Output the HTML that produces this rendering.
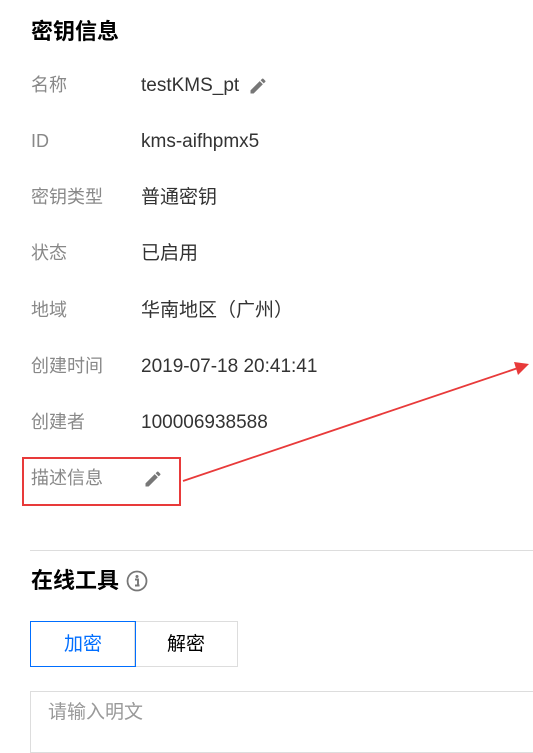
<!DOCTYPE html>
<html><head><meta charset="utf-8"><style>
body{margin:0;width:533px;height:740px;background:#fff;overflow:hidden;position:relative;font-family:"Liberation Sans","Noto Sans CJK SC",sans-serif;}
.a{position:absolute;white-space:nowrap;line-height:1;}
.t{font-size:22px;font-weight:bold;color:#000;}
.l{font-size:18px;color:#888;left:31px;}
.v{font-size:19px;color:#333;left:141px;}
</style></head><body>
<div class="a t" style="left:31px;top:21px">密钥信息</div>
<div class="a l" style="top:76px">名称</div><div class="a v" style="top:76px">testKMS_pt</div>
<svg class="a" style="left:248px;top:76px" width="20" height="20" viewBox="0 0 24 24"><path fill="#777" d="M3 17.25V21h3.75L17.81 9.94l-3.75-3.75L3 17.25zM20.71 7.04a1 1 0 000-1.41l-2.34-2.34a1 1 0 00-1.41 0l-1.83 1.83 3.75 3.75 1.83-1.83z"/></svg>
<div class="a l" style="top:132px">ID</div><div class="a v" style="top:132px">kms-aifhpmx5</div>
<div class="a l" style="top:188px">密钥类型</div><div class="a v" style="top:188px">普通密钥</div>
<div class="a l" style="top:244px">状态</div><div class="a v" style="top:244px">已启用</div>
<div class="a l" style="top:301px">地域</div><div class="a v" style="top:301px">华南地区（广州）</div>
<div class="a l" style="top:357px">创建时间</div><div class="a v" style="top:357px">2019-07-18 20:41:41</div>
<div class="a l" style="top:413px">创建者</div><div class="a v" style="top:413px">100006938588</div>
<div class="a l" style="top:469px">描述信息</div>
<svg class="a" style="left:143px;top:469px" width="20" height="20" viewBox="0 0 24 24"><path fill="#777" d="M3 17.25V21h3.75L17.81 9.94l-3.75-3.75L3 17.25zM20.71 7.04a1 1 0 000-1.41l-2.34-2.34a1 1 0 00-1.41 0l-1.83 1.83 3.75 3.75 1.83-1.83z"/></svg>
<div class="a" style="left:22px;top:457px;width:155px;height:45px;border:2px solid #e83a3a;"></div>
<svg class="a" style="left:0;top:0" width="533" height="740"><line x1="183" y1="481" x2="518" y2="368" stroke="#e83a3a" stroke-width="1.8"/><polygon points="529,364 514,362 518,375" fill="#e83a3a"/></svg>
<div class="a" style="left:30px;top:550px;width:503px;height:1px;background:#ddd"></div>
<div class="a t" style="left:31px;top:570px">在线工具</div>
<svg class="a" style="left:126px;top:570px" width="22" height="22" viewBox="0 0 22 22"><circle cx="11" cy="11" r="9.5" fill="none" stroke="#777" stroke-width="1.8"/><circle cx="11" cy="6.5" r="1.5" fill="#777"/><path d="M9 9.5h3v6h1.5M9 15.5h4.5" stroke="#777" stroke-width="1.9" fill="none"/></svg>
<div class="a" style="left:30px;top:621px;width:104px;height:44px;border:1px solid #006eff;z-index:2;color:#006eff;font-size:19px;display:flex;align-items:center;justify-content:center">加密</div>
<div class="a" style="left:134px;top:621px;width:102px;height:44px;border:1px solid #ddd;color:#000;font-size:19px;display:flex;align-items:center;justify-content:center">解密</div>
<div class="a" style="left:30px;top:691px;width:510px;height:60px;border:1px solid #ddd;"></div>
<div class="a" style="left:48px;top:703px;font-size:19px;color:#999">请输入明文</div>
</body></html>
